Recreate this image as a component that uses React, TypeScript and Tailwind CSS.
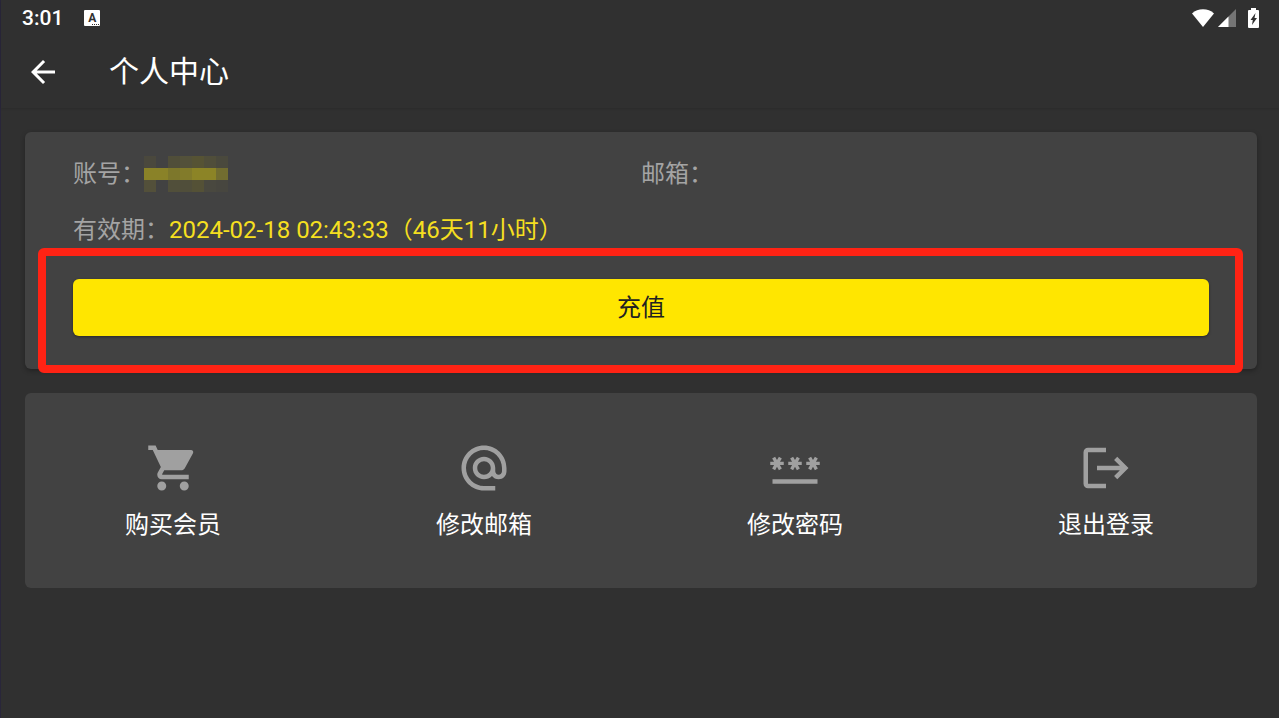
import type { IconType } from "react-icons";
import {
  MdAlternateEmail,
  MdArrowBack,
  MdLogout,
  MdPassword,
  MdShoppingCart,
} from "react-icons/md";

interface Action {
  label: string;
  icon: IconType;
}

const actions: Action[] = [
  { label: "购买会员", icon: MdShoppingCart },
  { label: "修改邮箱", icon: MdAlternateEmail },
  { label: "修改密码", icon: MdPassword },
  { label: "退出登录", icon: MdLogout },
];

// masked account name, one row of tiles per line
const maskTiles = [
  "bg-[#4a483d]", "bg-[#424242]", "bg-[#504e39]", "bg-[#53513a]", "bg-[#565334]", "bg-[#504e3a]", "bg-[#4a493d]",
  "bg-[#8a8228]", "bg-[#8a8228]", "bg-[#7d772b]", "bg-[#827b2a]", "bg-[#8c8426]", "bg-[#8c8426]", "bg-[#726d30]",
  "bg-[#53503a]", "bg-[#424242]", "bg-[#514f3a]", "bg-[#504e3a]", "bg-[#545136]", "bg-[#49483f]", "bg-[#47463f]",
];

function StatusBar() {
  return (
    <div className="flex h-9 items-center justify-between pr-5 pl-[21px]">
      <div className="flex items-center gap-[21px]">
        <span className="text-[21px] leading-9 font-medium">3:01</span>
        <span className="relative flex h-4 w-4 items-center justify-center rounded-[1px] bg-white text-[12px] leading-none font-bold text-[#303030]">
          A
          <span className="absolute right-px bottom-px w-[7px] border-b border-dotted border-[#303030]" />
        </span>
      </div>
      <div className="flex items-center">
        <svg className="mr-1 h-[18px] w-[22px]" viewBox="0 0 22 18" fill="#fff">
          <path d="M11 18 0 4.4C3 1.7 6.8 0.3 11 0.3s8 1.4 11 4.1z" />
        </svg>
        <svg className="mr-3 h-[18px] w-[18px]" viewBox="0 0 18 18">
          <path d="M0 18 18 0v18z" fill="#757575" />
          <path d="M0 18 10.5 7.5V18z" fill="#fff" />
        </svg>
        <svg className="h-5 w-[11px]" viewBox="0 0 11 20">
          <path d="M3 0h5v2h2q1 0 1 1v16q0 1-1 1H1q-1 0-1-1V3q0-1 1-1h2z" fill="#fff" />
          <path d="M7.500 5 2.500 12h2.300l-.8 5 5-7H6.500z" fill="#303030" />
        </svg>
      </div>
    </div>
  );
}

export default function App() {
  return (
    <div className="min-h-screen border-l border-[#29263a] bg-[#303030] font-[Roboto,'Noto_Sans_CJK_SC',sans-serif] text-white" lang="zh-CN">
      <header className="shadow-[0_1px_2px_rgba(0,0,0,0.12)]">
        <StatusBar />
        <div className="flex h-[72px] items-center gap-12 px-6">
          <button type="button" aria-label="返回">
            <MdArrowBack className="h-9 w-9" />
          </button>
          <h1 className="text-[30px] leading-9">个人中心</h1>
        </div>
      </header>

      <main className="flex flex-col gap-6 pt-6 pr-[22px] pl-6">
        <section className="rounded-md bg-[#424242] px-12 pt-6 pb-[33px] text-2xl leading-9 text-[#a4a4a4] shadow-[0_2px_5px_rgba(0,0,0,0.3)]">
          <div className="grid grid-cols-2">
            <div className="flex">
              <span>账号：</span>
              <div className="-ml-px grid grid-cols-7">
                {maskTiles.map((tile, i) => (
                  <span key={i} className={`h-3 w-3 ${tile}`} />
                ))}
              </div>
            </div>
            <div>邮箱：</div>
          </div>
          <div className="mt-5">
            有效期：<span className="text-[#f5df20]">2024-02-18 02:43:33（46天11小时）</span>
          </div>
          <div className="relative mt-[31px]">
            <button
              type="button"
              className="block h-[57px] w-full rounded-md bg-[#ffe600] text-[#212121] shadow-[0_1px_3px_rgba(0,0,0,0.4)]"
            >
              充值
            </button>
            <div className="pointer-events-none absolute -top-[31px] -right-[34px] -bottom-[37px] -left-[35px] rounded-md border-8 border-[#ff2314]" />
          </div>
        </section>

        <nav className="flex justify-between rounded-md bg-[#424242] pt-12 pr-[103px] pb-[45px] pl-[100px]">
          {actions.map(({ label, icon: Icon }) => (
            <button key={label} type="button" className="flex flex-col items-center gap-3">
              <Icon className="h-[54px] w-[54px] text-[#a0a0a0]" />
              <span className="text-2xl leading-9">{label}</span>
            </button>
          ))}
        </nav>
      </main>
    </div>
  );
}
